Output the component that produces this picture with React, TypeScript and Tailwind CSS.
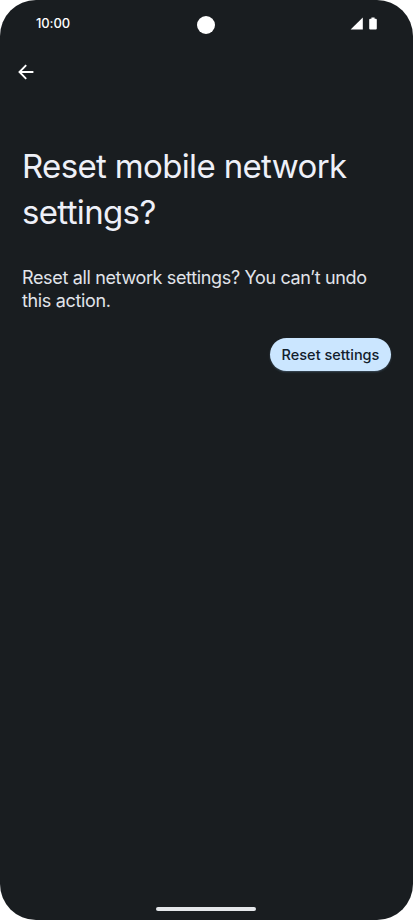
function StatusBar() {
    return (
        <header className="relative flex h-12 shrink-0 items-center justify-between pr-9 pl-9 text-white">
            <span className="-mt-0.5 text-[13px] leading-4 font-medium tracking-[-0.1px]">10:00</span>
            {/* Camera */}
            <div className="absolute top-[15.5px] left-[197px] size-[18px] rounded-full bg-white" />
            <div className="-mt-px flex items-center gap-1.5">
                <svg width="13" height="13" viewBox="0 0 13 13" fill="currentColor">
                    <path d="M12.8 0.5V12.5H0.6Z" />
                </svg>
                <svg width="8" height="13" viewBox="0 0 8 13" fill="currentColor">
                    <path d="M2.4 0.5h3.2v1.2h1.2a1 1 0 0 1 1 1v8.8a1 1 0 0 1-1 1H1.2a1 1 0 0 1-1-1V2.7a1 1 0 0 1 1-1h1.2z" />
                </svg>
            </div>
        </header>
    );
}

export default function App() {
    return (
        <div className="h-[920px] w-[413px] bg-white">
            <div className="flex h-full flex-col overflow-hidden rounded-[36px] bg-[#191d20] font-['Inter','Roboto',sans-serif]">
                <StatusBar />

                <nav className="flex h-12 shrink-0 items-center pl-[18px]">
                    <button type="button" aria-label="Back" className="text-white">
                        <svg width="16" height="16" viewBox="0 0 16 16" fill="none" stroke="currentColor" strokeWidth="1.9">
                            <path d="M15.4 8H2M8.2 1.2L1.5 8l6.7 6.8" />
                        </svg>
                    </button>
                </nav>

                <main className="flex grow flex-col px-[22px] pt-[47px]">
                    <h1 className="text-[33px] leading-[46px] font-normal tracking-[-0.65px] whitespace-nowrap text-[#eef0f8]">
                        Reset mobile network
                        <br />
                        settings?
                    </h1>
                    <p className="mt-[31px] text-[18px] leading-[23px] tracking-[-0.35px] whitespace-nowrap text-[#e1e4ea]">
                        Reset all network settings? You can’t undo
                        <br />
                        this action.
                    </p>
                    <button
                        type="button"
                        className="mt-[26px] flex h-[33px] w-[121px] items-center justify-center self-end rounded-full bg-[#cbe6ff] text-[14.5px] font-medium whitespace-nowrap text-[#12202c] shadow-[0_1px_2px_#3c4c5a]"
                    >
                        Reset settings
                    </button>
                </main>

                {/* Gesture bar */}
                <div className="mr-px mb-[9px] h-1 w-[100px] shrink-0 self-center rounded-full bg-[#e4e7ea]" />
            </div>
        </div>
    );
}
